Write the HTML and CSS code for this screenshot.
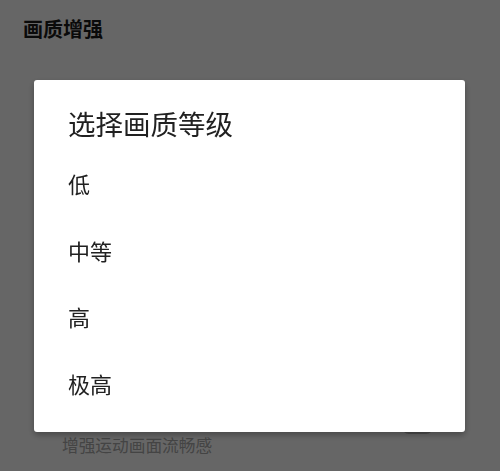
FILE: index.html
```html
<!DOCTYPE html>
<html lang="zh-CN">
<head>
<meta charset="utf-8">
<title>画质增强</title>
<link rel="stylesheet" href="styles.css">
</head>
<body>
<div class="page">
  <h1 class="header">画质增强</h1>
  <div class="list">
    <div class="row">
      <div class="row-text">
        <div class="row-title">运动补偿</div>
        <div class="row-sub">增强运动画面流畅感</div>
      </div>
      <div class="switch"></div>
    </div>
  </div>
</div>
<div class="overlay">
  <div class="dialog">
    <div class="dialog-title">选择画质等级</div>
    <ul class="options">
      <li class="option">低</li>
      <li class="option">中等</li>
      <li class="option">高</li>
      <li class="option">极高</li>
    </ul>
  </div>
</div>
</body>
</html>
```
FILE: styles.css
```css
html, body {
  margin: 0;
  padding: 0;
  width: 500px;
  height: 471px;
  overflow: hidden;
  background: #ffffff;
  font-family: "Noto Sans CJK SC", "Noto Sans", sans-serif;
}

.page {
  height: 471px;
}

.header {
  margin: 0;
  padding: 15px 0 0 23px;
  font-size: 20px;
  line-height: 28px;
  font-weight: bold;
  color: #1a1a1a;
}

.list {
  margin-top: 358px;
}

.row {
  display: flex;
  align-items: flex-start;
  padding: 12px 67px 12px 62px;
}

.row-text {
  flex: 1;
}

.row-title {
  font-size: 17px;
  line-height: 20px;
  color: #000000;
}

.row-sub {
  font-size: 16.7px;
  line-height: 24px;
  color: #aaaaaa;
}

.switch {
  width: 31px;
  height: 14px;
  margin-top: 7px;
  border-radius: 7px;
  background: #bdbdbd;
}

.overlay {
  position: fixed;
  inset: 0;
  background: rgba(0, 0, 0, 0.6);
  display: flex;
  justify-content: center;
  align-items: flex-start;
  padding-top: 80px;
  box-sizing: border-box;
}

.dialog {
  width: 431px;
  height: 352px;
  margin-left: -1px;
  background: #ffffff;
  border-radius: 3px;
  box-shadow: 0 3px 6px rgba(0, 0, 0, 0.3);
  box-sizing: border-box;
  padding: 25px 0 0 34px;
}

.dialog-title {
  font-size: 27.5px;
  line-height: 36px;
  color: #212121;
  margin-bottom: 11px;
}

.options {
  list-style: none;
  margin: 0;
  padding: 0;
}

.option {
  font-size: 22px;
  line-height: 30px;
  padding: 16.25px 0 20.25px;
  color: #212121;
}
```
